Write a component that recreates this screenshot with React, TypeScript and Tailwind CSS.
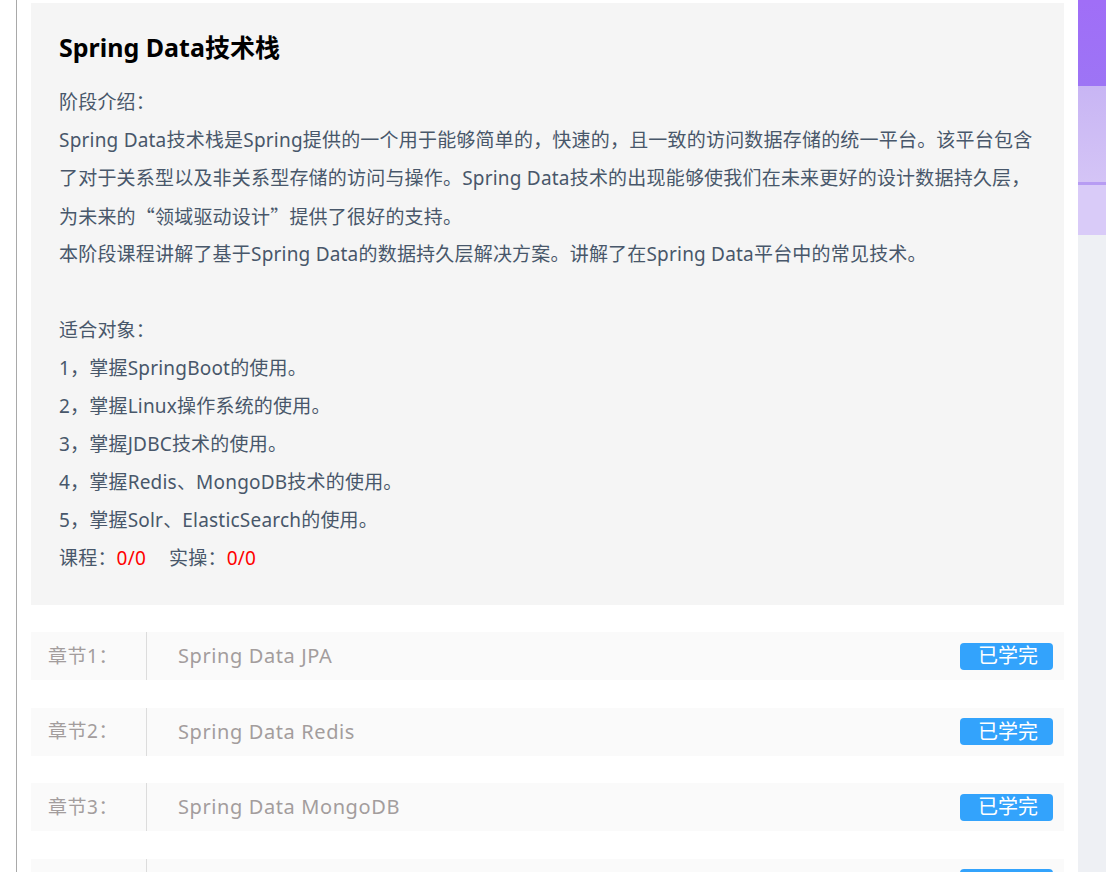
import React from "react";

const font = { fontFamily: '"Noto Sans", "Noto Sans CJK SC", sans-serif' };
const cjk = { fontFamily: '"Noto Sans CJK SC", sans-serif' };

const chapters = [
  "Spring Data JPA",
  "Spring Data Redis",
  "Spring Data MongoDB",
  "Spring Data Elasticsearch",
];

export default function App() {
  return (
    <div className="flex h-[872px] w-[1106px] overflow-hidden bg-white" style={font}>
      <div className="w-[16px] shrink-0 bg-white" />
      <div className="w-px shrink-0 bg-[#a9a9a9]" />
      <main className="flex-1 px-[14px] pt-[3px]">
        <section className="bg-[#f5f5f5] px-[28px] pb-[28px] pt-[26px]">
          <h1 className="text-[25px] font-bold leading-[36px] text-black">Spring Data技术栈</h1>
          <div className="mt-[18px] text-[19px] leading-[38px] tracking-[0.2px] text-[#48576a] whitespace-nowrap">
            <p>阶段介绍：</p>
            <p>Spring Data技术栈是Spring提供的一个用于能够简单的，快速的，且一致的访问数据存储的统一平台。该平台包含</p>
            <p>了对于关系型以及非关系型存储的访问与操作。Spring Data技术的出现能够使我们在未来更好的设计数据持久层，</p>
            <p className="h-[38px] overflow-hidden">
              为未来的<span style={cjk}>“</span>领域驱动设计<span style={cjk}>”</span>提供了很好的支持。
            </p>
            <p>本阶段课程讲解了基于Spring Data的数据持久层解决方案。讲解了在Spring Data平台中的常见技术。</p>
            <p className="h-[38px]" />
            <p>适合对象：</p>
            <p>1，掌握SpringBoot的使用。</p>
            <p>2，掌握Linux操作系统的使用。</p>
            <p>3，掌握JDBC技术的使用。</p>
            <p>4，掌握Redis、MongoDB技术的使用。</p>
            <p>5，掌握Solr、ElasticSearch的使用。</p>
            <p>
              课程：<span className="text-[#ff0000]">0/0</span>
              <span className="ml-[23px]">实操：</span>
              <span className="text-[#ff0000]">0/0</span>
            </p>
          </div>
        </section>
        <div className="mt-[27px] flex flex-col gap-[27.5px]">
          {chapters.map((c, i) => (
            <div key={c} className="flex h-[48px] items-center bg-[#fafafa]">
              <div className="flex h-full w-[116px] items-center border-r border-[#dcdcdc] pl-[17px] text-[19px] tracking-[0.5px] text-[#a39d9d]">
                章节{i + 1}：
              </div>
              <div className="flex-1 pl-[31px] text-[20px] tracking-[0.6px] text-[#a39d9d]">{c}</div>
              <div className="mr-[11px] flex h-[27px] w-[93px] items-center justify-center rounded-[4px] bg-[#33a3fc] pl-[3px] text-[20px] leading-none text-white">
                已学完
              </div>
            </div>
          ))}
        </div>
      </main>
      <div className="w-[28px] shrink-0 bg-[#eef0f4]">
        <div className="h-[86px] bg-gradient-to-b from-[#a06ef7] to-[#9d74f5]" />
        <div className="h-[96px] bg-gradient-to-b from-[#c8b5f4] to-[#d4c4f6]" />
        <div className="h-[3px] bg-[#b79cf3]" />
        <div className="h-[50px] bg-[#d9cbf8]" />
      </div>
    </div>
  );
}
